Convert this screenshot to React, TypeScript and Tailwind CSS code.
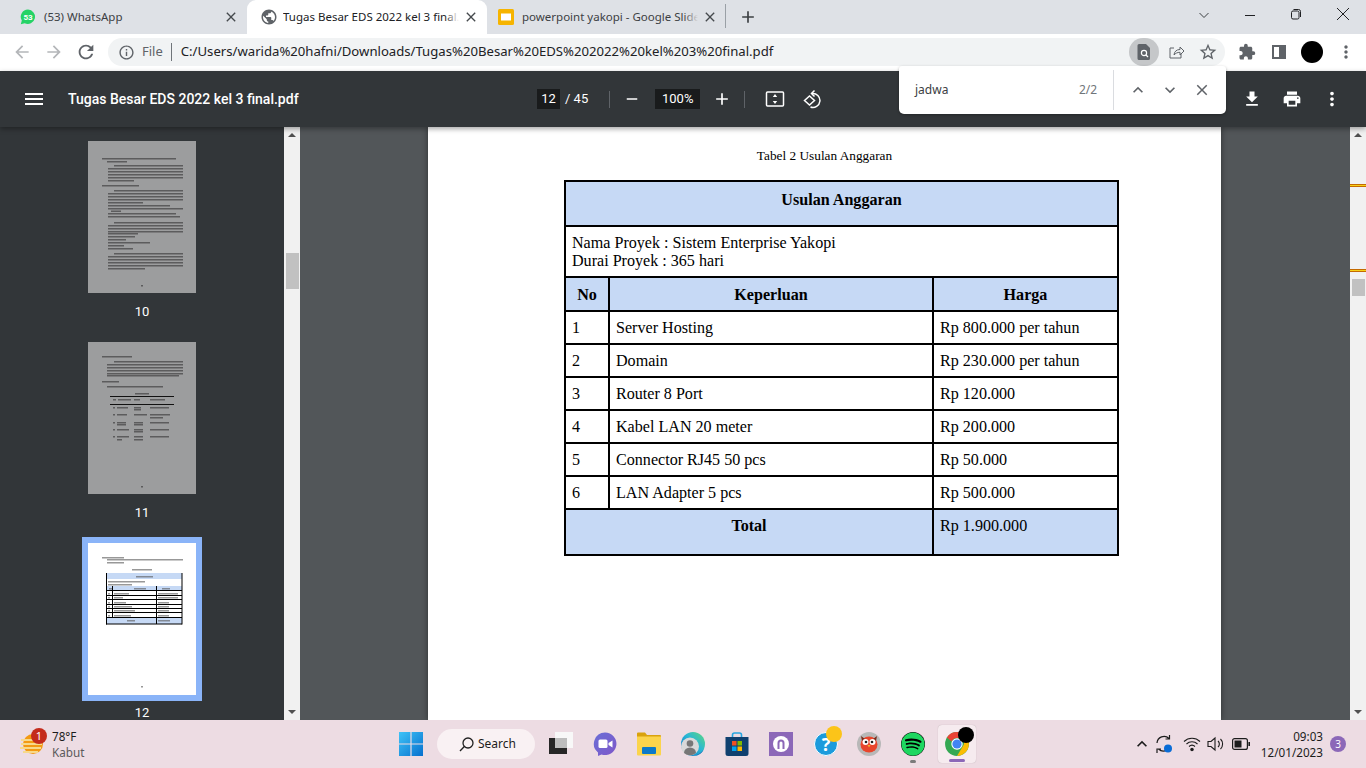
import React from 'react';
import { FaSpotify } from 'react-icons/fa';
import {
  MdArrowBack,
  MdArrowForward,
  MdExtension,
  MdFileDownload,
  MdInfoOutline,
  MdKeyboardArrowDown,
  MdKeyboardArrowUp,
  MdMenu,
  MdMoreVert,
  MdPrint,
  MdRefresh,
  MdClose,
  MdAdd,
  MdRemove,
  MdStarBorder,
  MdPublic,
} from 'react-icons/md';

const budgetRows = [
  ['1', 'Server Hosting', 'Rp 800.000 per tahun'],
  ['2', 'Domain', 'Rp 230.000 per tahun'],
  ['3', 'Router 8 Port', 'Rp 120.000'],
  ['4', 'Kabel LAN 20 meter', 'Rp 200.000'],
  ['5', 'Connector RJ45 50 pcs', 'Rp 50.000'],
  ['6', 'LAN Adapter 5 pcs', 'Rp 500.000'],
];

// [x, y, width] of the blurred text lines, in thumbnail pixels
const thumb10Lines = [
  [14, 17, 74], [19, 20, 20], [26, 24, 69], [20, 27, 75], [20, 30, 75], [20, 33, 75], [20, 36, 75], [20, 39, 26],
  [14, 44, 37], [26, 49, 69], [20, 52, 75], [20, 55, 75], [20, 58, 75], [20, 61, 35], [20, 64, 62], [20, 67, 75],
  [23, 69.5, 10], [20, 72, 68], [20, 75, 72], [26, 81, 69], [20, 84, 75], [20, 87, 75], [20, 90, 75], [20, 92, 30],
  [20, 95, 27], [20, 98, 18], [20, 101, 42], [20, 104, 16], [20, 107, 25], [26, 112, 69], [20, 115, 75], [20, 118, 75],
  [20, 121, 75], [20, 124, 75], [20, 127, 37], [53, 144, 2],
];

const thumb11Lines = [
  [14, 14, 30], [26, 19, 69], [19, 22, 76], [19, 25, 76], [19, 28, 76], [19, 31, 76], [19, 33, 72], [14, 39, 17], [19, 44, 56],
  [47, 51, 14], [25, 57, 3], [30, 57, 13], [46, 57, 6], [62, 57, 15], [25, 65, 2], [29, 65, 11], [46, 65, 7], [62, 65, 19],
  [46, 67, 7], [25, 72, 2], [29, 72, 10], [46, 72, 13], [62, 72, 20], [62, 75, 13], [25, 80, 2], [29, 80, 9], [46, 80, 9],
  [62, 80, 19], [29, 82, 9], [46, 82, 9], [25, 87, 2], [29, 87, 12], [46, 87, 9], [62, 87, 19], [46, 89, 9], [25, 94, 2],
  [29, 94, 12], [46, 94, 9], [62, 94, 19], [29, 97, 5], [46, 97, 9], [53, 144, 2],
];

const thumb12Lines = [
  [14, 14, 22], [19, 16, 76], [19, 19, 17], [44, 26, 20], [48, 33, 17], [20, 38, 37], [20, 41, 24], [21, 45, 3], [46, 45, 12],
  [74, 45, 8], [20, 50, 2], [26, 50, 15], [70, 50, 20], [20, 54, 2], [26, 54, 9], [70, 54, 20], [20, 59, 2], [26, 59, 12],
  [70, 59, 11], [20, 63, 2], [26, 63, 18], [70, 63, 11], [20, 67, 2], [26, 67, 21], [70, 67, 11], [20, 72, 2], [26, 72, 17],
  [70, 72, 11], [39, 77, 8], [70, 77, 12], [53, 143, 2],
];

function ThumbLines({ lines, color, id }: { lines: number[][]; color: string; id: string }) {
  return (
    <>
      <filter id={id} x="-10%" y="-10%" width="120%" height="120%">
        <feGaussianBlur stdDeviation="0.7" />
      </filter>
      <g fill={color} opacity="0.6" filter={`url(#${id})`}>
        {lines.map(([x, y, w], i) => (
          <rect key={i} x={x} y={y} width={w} height={1.5} />
        ))}
      </g>
    </>
  );
}

function Thumb({ num }: { num: number }) {
  const selected = num === 12;
  return (
    <div className="flex h-[201px] w-full shrink-0 flex-col items-center">
      <div className={selected ? 'border-[6px] border-[#8ab4f8] -mt-[6px]' : ''}>
        <svg
          width="108"
          height="152"
          viewBox="0 0 108 152"
          className={selected ? 'block bg-white' : 'block bg-[#9c9d9e]'}
        >
          {num === 10 && <ThumbLines id="thumbBlur10" lines={thumb10Lines} color="#333" />}
          {num === 11 && (
            <>
              <ThumbLines id="thumbBlur11" lines={thumb11Lines} color="#333" />
              <rect x="22" y="54" width="64" height="1" fill="#111" />
              <rect x="22" y="62" width="64" height="1" fill="#111" />
            </>
          )}
          {num === 12 && (
            <>
              <rect x="18" y="30" width="76" height="6" fill="#c6d9f5" />
              <rect x="18" y="43" width="76" height="4" fill="#c6d9f5" />
              <rect x="18" y="74" width="76" height="7" fill="#c6d9f5" />
              <ThumbLines id="thumbBlur12" lines={thumb12Lines} color="#555" />
              <g fill="#000">
                <rect x="18" y="30" width="1" height="51.500" />
                <rect x="93.500" y="30" width="1" height="51.500" />
                <rect x="24" y="43" width="1" height="31" />
                <rect x="68" y="43" width="1" height="38" />
                {[47, 52, 56, 61, 65, 69, 74, 80.5].map((y) => (
                  <rect key={y} x="18" y={y} width="76" height="1" />
                ))}
              </g>
            </>
          )}
        </svg>
      </div>
      <span className={`text-[13px] leading-[16px] text-white ${selected ? 'mt-[4px]' : 'mt-[11px]'}`}>{num}</span>
    </div>
  );
}

function Scrollbar({ thumb, markers }: { thumb: string; markers?: boolean }) {
  return (
    <div className="relative h-full w-[16px] shrink-0 bg-[#f1f1f1]">
      <div className="absolute left-[4px] top-[6px] h-0 w-0 border-x-[4px] border-b-[4px] border-x-transparent border-b-[#505050]" />
      <div className={`absolute left-[2px] w-[13px] bg-[#c1c1c1] ${thumb}`} />
      {markers && (
        <>
          <div className="absolute left-0 top-[57px] h-[3px] w-full border-y border-y-[#c46a00] bg-[#f7d117]" />
          <div className="absolute left-0 top-[142px] h-[3px] w-full border-y border-y-[#c46a00] bg-[#f7d117]" />
        </>
      )}
      <div className="absolute bottom-[6px] left-[4px] h-0 w-0 border-x-[4px] border-t-[4px] border-x-transparent border-t-[#505050]" />
    </div>
  );
}

function WhatsAppIcon() {
  return (
    <svg width="16" height="16" viewBox="0 0 16 16" className="shrink-0">
      <path d="M8 .6a7.2 7.2 0 0 0-6.2 10.9L.8 15.300l3.900-1A7.200 7.200 0 1 0 8 .6z" fill="#25d366" />
      <text x="8" y="10.600" textAnchor="middle" fontSize="8" fontWeight="700" fill="#fff" fontFamily="Roboto, sans-serif">53</text>
    </svg>
  );
}

function ChromeLogo() {
  return (
    <svg width="26" height="26" viewBox="0 0 48 48">
      <circle cx="24" cy="24" r="22" fill="#34a853" />
      <path d="M24 2a22 22 0 0 1 19 11H24a11 11 0 0 0-10 6.500L5.500 12A22 22 0 0 1 24 2z" fill="#ea4335" />
      <path d="M43 13a22 22 0 0 1-19 33l10.500-17.500A11 11 0 0 0 33 13z" fill="#fbbc04" />
      <circle cx="24" cy="24" r="10.500" fill="#fff" />
      <circle cx="24" cy="24" r="8.500" fill="#4285f4" />
    </svg>
  );
}

function BrowserChrome() {
  return (
    <>
      <div className="flex h-[34px] shrink-0 items-end bg-[#dee1e6] text-[11.500px] leading-none text-[#3c4043]">
        <div className="flex h-[34px] w-[247px] items-center pl-[20px] pr-[8px]">
          <WhatsAppIcon />
          <span className="ml-[8px] flex-1 whitespace-nowrap">(53) WhatsApp</span>
          <MdClose size={16} className="text-[#45494d]" />
        </div>
        <div className="flex h-[34px] w-[240px] items-center rounded-t-[9px] bg-white pl-[13px] pr-[8px] text-[#202124]">
          <MdPublic size={18} className="shrink-0 text-[#5f6368]" />
          <span className="relative ml-[5px] flex-1 overflow-hidden whitespace-nowrap py-[2px]">
            Tugas Besar EDS 2022 kel 3 final.pdf
            <span className="absolute inset-y-0 right-0 w-[14px] bg-gradient-to-l from-white to-transparent" />
          </span>
          <MdClose size={16} className="ml-[4px] shrink-0 text-[#45494d]" />
        </div>
        <div className="flex h-[34px] w-[238px] items-center pl-[11px] pr-[7px]">
          <svg width="16" height="16" viewBox="0 0 16 16" className="shrink-0">
            <rect width="16" height="16" rx="1.500" fill="#f6b400" />
            <rect x="3" y="4.500" width="10" height="7" fill="#fff" />
          </svg>
          <span className="relative ml-[8px] flex-1 overflow-hidden whitespace-nowrap py-[2px]">
            powerpoint yakopi - Google Slides
            <span className="absolute inset-y-0 right-0 w-[14px] bg-gradient-to-l from-[#dee1e6] to-transparent" />
          </span>
          <MdClose size={16} className="ml-[4px] shrink-0 text-[#45494d]" />
        </div>
        <div className="mb-[6px] h-[24px] w-px bg-[#9aa0a6]" />
        <MdAdd size={20} className="mb-[7px] ml-[12px] text-[#3c4043]" />
        <div className="ml-auto flex h-[34px] items-start text-[#202124]">
          <svg width="12" height="12" viewBox="0 0 12 12" className="mr-[34px] mt-[9px] fill-none stroke-[#3c4043]">
            <path d="M1.500 4L6 8.500 10.500 4" />
          </svg>
          <svg width="12" height="12" viewBox="0 0 12 12" className="mr-[34px] mt-[9px] stroke-[#202124]">
            <path d="M1 6.500h10" />
          </svg>
          <svg width="12" height="12" viewBox="0 0 12 12" className="mr-[34px] mt-[8px] fill-none stroke-[#202124]">
            <rect x="1.500" y="3" width="7.500" height="8" rx="1.500" />
            <path d="M3.500 1.500h5a2 2 0 0 1 2 2V9" />
          </svg>
          <svg width="14" height="14" viewBox="0 0 14 14" className="mr-[16px] mt-[7px] stroke-[#202124]">
            <path d="M1 1l12 12M13 1L1 13" />
          </svg>
        </div>
      </div>
      <div className="flex h-[37px] shrink-0 items-center bg-white pb-[1px] pl-[12px]">
        <MdArrowBack size={20} className="text-[#b4b6b9]" />
        <MdArrowForward size={20} className="ml-[12px] text-[#b4b6b9]" />
        <MdRefresh size={22} className="ml-[11px] text-[#5f6368]" />
        <div className="ml-[11px] flex h-[28px] w-[1117px] items-center rounded-full bg-[#f1f3f4] pl-[10px] pr-[6px] text-[13px] text-[#202124]">
          <MdInfoOutline size={17} className="text-[#5f6368]" />
          <span className="ml-[7px] text-[#5f6368]">File</span>
          <span className="ml-[8px] mr-[9px] h-[18px] w-px bg-[#70757a]" />
          <span className="text-[13.150px]">C:/Users/warida%20hafni/Downloads/Tugas%20Besar%20EDS%202022%20kel%203%20final.pdf</span>
          <div className="ml-auto flex items-center">
            <div className="flex h-[28px] w-[30px] items-center justify-center rounded-full bg-[#c5c7c9]">
              <svg width="14" height="16" viewBox="0 0 14 16">
                <path d="M2 0h7l4 4v10.500a1.500 1.500 0 0 1-1.500 1.500h-9.500A1.500 1.500 0 0 1 .5 14.500V1.500A1.500 1.500 0 0 1 2 0z" fill="#5f6368" />
                <circle cx="7" cy="9" r="2.600" fill="none" stroke="#fff" strokeWidth="1.200" />
                <path d="M9 11l2 2" stroke="#fff" strokeWidth="1.200" />
              </svg>
            </div>
            <svg width="18" height="18" viewBox="0 0 18 18" className="ml-[8px] fill-none stroke-[#5f6368]">
              <path d="M14 10.500V15H3V5h4" />
              <path d="M7 12c.3-3.500 2.500-5.500 6-5.500V4l4 4-4 4V9.300c-2.600 0-4.600 1-6 2.700z" />
            </svg>
            <MdStarBorder size={20} className="ml-[13px] mr-[1px] text-[#5f6368]" />
          </div>
        </div>
        <MdExtension size={18} className="ml-[13px] text-[#5f6368]" />
        <div className="ml-[16px] flex h-[14px] w-[14px] border-2 border-[#5f6368]">
          <div className="ml-auto h-full w-[5px] bg-[#5f6368]" />
        </div>
        <div className="ml-[15px] h-[22px] w-[22px] rounded-full bg-black" />
        <MdMoreVert size={20} className="ml-[13px] text-[#5f6368]" />
      </div>
    </>
  );
}

function PdfToolbar() {
  return (
    <div className="relative z-10 flex h-[56px] shrink-0 items-center bg-[#323639] pl-[22px] text-white shadow-[0_2px_5px_rgba(0,0,0,0.35)] [font-family:Roboto,sans-serif]">
      <MdMenu size={24} />
      <span className="ml-[22px] w-[469px] text-[14px] font-medium">Tugas Besar EDS 2022 kel 3 final.pdf</span>
      <span className="flex h-[20px] w-[23px] items-center justify-center bg-[#191b1c] text-[13px]">12</span>
      <span className="ml-[5px] text-[13px]">/ 45</span>
      <span className="ml-[21px] h-[17px] w-px bg-[#5f6368]" />
      <MdRemove size={18} className="ml-[13px]" />
      <span className="ml-[14px] flex h-[20px] w-[45px] items-center justify-center bg-[#191b1c] text-[13px]">100%</span>
      <MdAdd size={20} className="ml-[12px]" />
      <span className="ml-[12px] h-[17px] w-px bg-[#5f6368]" />
      <svg width="20" height="20" viewBox="0 0 20 20" className="ml-[20px] fill-none stroke-white">
        <rect x="1.500" y="3" width="17" height="14" rx="1" strokeWidth="1.500" />
        <path d="M10 5L7.800 8h4.400zM10 15l-2.200-3h4.400z" fill="#fff" stroke="none" />
      </svg>
      <svg width="20" height="20" viewBox="0 0 20 20" className="ml-[17px] fill-none stroke-white" strokeWidth="1.500">
        <path d="M2.500 11.500L7.500 7l5 4.500-5 4.500z" />
        <path d="M10 4.500a7 7 0 1 1-1.500 13.500" />
        <path d="M12.500 1.500L9.500 4.500l3 3" />
      </svg>
      <div className="ml-auto flex items-center pr-[23px]">
        <MdFileDownload size={20} />
        <MdPrint size={20} className="ml-[20px]" />
        <MdMoreVert size={22} className="ml-[19px]" />
      </div>
    </div>
  );
}

function FindBar() {
  return (
    <div className="absolute left-[899px] top-[66px] z-20 flex h-[48px] w-[327px] items-center rounded-b-[5px] rounded-t-[3px] bg-white pl-[16px] text-[12px] text-[#3c4043] shadow-[0_1px_3px_rgba(0,0,0,0.3)]">
      <span className="w-[164px]">jadwa</span>
      <span className="text-[#70757a]">2/2</span>
      <span className="ml-[16px] h-[40px] w-px bg-[#dadce0]" />
      <MdKeyboardArrowUp size={20} className="ml-[14px] text-[#5f6368]" />
      <MdKeyboardArrowDown size={20} className="ml-[12px] text-[#5f6368]" />
      <MdClose size={18} className="ml-[13px] text-[#5f6368]" />
    </div>
  );
}

function BudgetTable() {
  const cell = 'border-2 border-black px-[6px] align-middle';
  return (
    <table className="ml-[136px] mt-[16px] w-[553px] table-fixed border-collapse text-[16.100px] leading-[18px] text-black">
      <colgroup>
        <col className="w-[44px]" />
        <col className="w-[324px]" />
        <col className="w-[185px]" />
      </colgroup>
      <tbody>
        <tr>
          <td colSpan={3} className="h-[45px] border-2 border-black bg-[#c6d9f5] pb-[8px] text-center font-bold">Usulan Anggaran</td>
        </tr>
        <tr>
          <td colSpan={3} className={`h-[51px] ${cell}`}>
            Nama Proyek : Sistem Enterprise Yakopi
            <br />
            Durai Proyek : 365 hari
          </td>
        </tr>
        <tr className="bg-[#c6d9f5] font-bold">
          <td className={`h-[34px] pt-[2px] text-center ${cell}`}>No</td>
          <td className={`pt-[2px] text-center ${cell}`}>Keperluan</td>
          <td className={`pt-[2px] text-center ${cell}`}>Harga</td>
        </tr>
        {budgetRows.map((row) => (
          <tr key={row[0]}>
            <td className={`h-[33px] ${cell}`}>{row[0]}</td>
            <td className={cell}>{row[1]}</td>
            <td className={cell}>{row[2]}</td>
          </tr>
        ))}
        <tr className="bg-[#c6d9f5]">
          <td colSpan={2} className="h-[46px] border-2 border-black pb-[12px] text-center font-bold">Total</td>
          <td className="border-2 border-black px-[6px] pb-[12px]">Rp 1.900.000</td>
        </tr>
      </tbody>
    </table>
  );
}

function Taskbar() {
  return (
    <div className="flex h-[48px] shrink-0 items-center bg-[#eddce3] text-[#1c1c1c]">
      <div className="flex w-[399px] shrink-0 items-center pl-[20px]">
        <div className="relative h-[26px] w-[24px]">
          <svg width="24" height="26" viewBox="0 0 24 26">
            <circle cx="13" cy="13" r="10" fill="#f39a12" />
            <path d="M1 9h19M1 13h21M0 17h21M3 21h15" stroke="#f7d98b" strokeWidth="2" />
          </svg>
          <span className="absolute -top-[3px] left-[11px] flex h-[16px] w-[16px] items-center justify-center rounded-full bg-[#c42b1c] text-[11px] text-white">1</span>
        </div>
        <div className="ml-[8px] flex flex-col text-[11.700px] leading-[16px]">
          <span>78°F</span>
          <span className="text-[#5c5a5c]">Kabut</span>
        </div>
      </div>
      <svg width="24" height="24" viewBox="0 0 24 24" className="shrink-0">
        <defs>
          <linearGradient id="winGrad" x1="0" y1="0" x2="1" y2="1">
            <stop offset="0" stopColor="#3fc3f7" />
            <stop offset="1" stopColor="#0670ce" />
          </linearGradient>
        </defs>
        <path d="M0 0h11.400v11.400H0zM12.600 0H24v11.400H12.600zM0 12.600h11.400V24H0zM12.600 12.600H24V24H12.600z" fill="url(#winGrad)" />
      </svg>
      <div className="ml-[14px] flex h-[30px] w-[98px] items-center rounded-full bg-[#f9f1f3] pl-[22px] text-[12px]">
        <svg width="15" height="15" viewBox="0 0 15 15" className="fill-none stroke-[#202020]" strokeWidth="1.300">
          <circle cx="9" cy="6" r="5" />
          <path d="M5.300 9.500L1 14" />
        </svg>
        <span className="ml-[4px]">Search</span>
      </div>
      {/* task view */}
      <svg width="24" height="24" viewBox="0 0 24 24" className="ml-[14px] shrink-0">
        <rect x="6" y="0" width="18" height="16" fill="#f8f8f8" />
        <rect x="0" y="6" width="18" height="16" fill="#262626" />
        <rect x="6" y="6" width="12" height="10" fill="#bdbdbd" />
      </svg>
      {/* meet */}
      <svg width="24" height="24" viewBox="0 0 24 24" className="ml-[20px] shrink-0">
        <defs>
          <linearGradient id="meetGrad" x1="0" y1="0" x2="1" y2="1">
            <stop offset="0" stopColor="#6a6fd6" />
            <stop offset="1" stopColor="#7f57c9" />
          </linearGradient>
        </defs>
        <path d="M12 0.500a11.300 11.300 0 1 1-3.500 22l-3.500 1.500v-3.500A11.300 11.300 0 0 1 12 0.500z" fill="url(#meetGrad)" />
        <rect x="5.500" y="7.500" width="9" height="8.500" rx="1.500" fill="#fff" />
        <path d="M15.500 11l4-2.500v7l-4-2.500z" fill="#fff" />
      </svg>
      {/* explorer */}
      <svg width="24" height="24" viewBox="0 0 24 24" className="ml-[20px] shrink-0">
        <path d="M0 1.500a1 1 0 0 1 1-1h7l2 2.500h13a1 1 0 0 1 1 1V8H0z" fill="#d9a20e" />
        <path d="M0 4.500h24v18a1 1 0 0 1-1 1H1a1 1 0 0 1-1-1z" fill="#fbd44c" />
        <rect x="5" y="15" width="14" height="7" rx="1" fill="#0c79c9" />
      </svg>
      {/* edge profile */}
      <svg width="24" height="24" viewBox="0 0 24 24" className="ml-[20px] shrink-0">
        <defs>
          <linearGradient id="edgeGrad" x1="0" y1="1" x2="1" y2="0">
            <stop offset="0" stopColor="#0c6fc4" />
            <stop offset="0.55" stopColor="#2ab7d6" />
            <stop offset="1" stopColor="#5fd97a" />
          </linearGradient>
        </defs>
        <circle cx="12" cy="12" r="12" fill="url(#edgeGrad)" />
        <path d="M23 17a12 12 0 0 1-10 7c4-1 7-3 10-7z" fill="#0c5fae" />
        <circle cx="9" cy="14.500" r="9" fill="#d9d9d9" />
        <circle cx="9" cy="11.500" r="3.300" fill="#777" />
        <path d="M3 21a6 5.500 0 0 1 12 0 9 9 0 0 1-12 0z" fill="#777" />
      </svg>
      {/* store */}
      <svg width="24" height="24" viewBox="0 0 24 24" className="ml-[20px] shrink-0">
        <path d="M7.500 6V3a2 2 0 0 1 2-2h5a2 2 0 0 1 2 2v3" fill="none" stroke="#27a5e0" strokeWidth="1.600" />
        <path d="M0.500 5h23v16.500a2.500 2.500 0 0 1-2.500 2.500H3a2.500 2.500 0 0 1-2.500-2.500z" fill="#10406f" />
        <rect x="7" y="9" width="4.500" height="4.500" fill="#f25022" />
        <rect x="12.500" y="9" width="4.500" height="4.500" fill="#7fba00" />
        <rect x="7" y="14.500" width="4.500" height="4.500" fill="#00a4ef" />
        <rect x="12.500" y="14.500" width="4.500" height="4.500" fill="#ffb900" />
      </svg>
      {/* purple app */}
      <svg width="24" height="24" viewBox="0 0 24 24" className="ml-[20px] shrink-0">
        <rect width="24" height="24" fill="#8c68b8" />
        <circle cx="12" cy="12" r="8" fill="#fff" />
        <path d="M8.500 17v-6a3.500 3.500 0 0 1 7 0v6h-2v-6a1.500 1.500 0 0 0-3 0v6z" fill="#8c68b8" />
      </svg>
      <div className="relative ml-[21px] h-[24px] w-[24px] shrink-0">
        <div className="flex h-[24px] w-[24px] items-center justify-center rounded-full border border-white bg-[#1c9bdc] text-[18px] font-bold leading-none text-white">?</div>
        <div className="absolute -right-[4px] -top-[6px] h-[16px] w-[16px] rounded-full bg-[#fcc419]" />
      </div>
      {/* owl */}
      <svg width="24" height="24" viewBox="0 0 24 24" className="ml-[19px] shrink-0">
        <circle cx="12" cy="12" r="12" fill="#b8b8b8" />
        <ellipse cx="12" cy="12.500" rx="8.500" ry="8" fill="#e8452c" />
        <path d="M4 4l4 3-3 2zM20 4l-4 3 3 2z" fill="#7a2a1a" />
        <circle cx="8.500" cy="10" r="3" fill="#fff" />
        <circle cx="15.500" cy="10" r="3" fill="#fff" />
        <circle cx="9" cy="10" r="1.300" fill="#222" />
        <circle cx="15" cy="10" r="1.300" fill="#222" />
        <path d="M10.500 13l1.500 2.500 1.500-2.500z" fill="#f2b233" />
      </svg>
      <div className="relative ml-[20px] h-[24px] w-[24px] shrink-0">
        <FaSpotify size={24} className="rounded-full bg-black text-[#1ed760]" />
        <span className="absolute -bottom-[7px] left-[9px] h-[3px] w-[6px] rounded-full bg-[#7b7b7b]" />
      </div>
      <div className="relative ml-[13px] flex h-[38px] w-[38px] shrink-0 items-center justify-center rounded-[4px] bg-[#f6ebef] shadow-[0_0_1px_rgba(0,0,0,0.25)]">
        <ChromeLogo />
        <span className="absolute right-[2px] top-[2px] h-[16px] w-[16px] rounded-full bg-black" />
        <span className="absolute bottom-[1px] left-[11px] h-[3px] w-[16px] rounded-full bg-[#8c68b8]" />
      </div>
      <div className="ml-auto flex items-center pr-[20px] text-[11.700px]">
        <MdKeyboardArrowUp size={20} className="text-[#1c1c1c]" />
        <svg width="18" height="20" viewBox="0 0 18 20" className="ml-[3px] fill-none stroke-[#1c1c1c]" strokeWidth="1.200">
          <path d="M2 9a7 7 0 0 1 12-4.500M14.500 1v4h-4M12 16a7 7 0 0 1-8.500-1M2 19v-4h4" />
          <circle cx="13" cy="14.500" r="4" fill="#0a6cd6" stroke="none" />
        </svg>
        <svg width="18" height="16" viewBox="0 0 18 16" className="ml-[10px] fill-none stroke-[#1c1c1c]" strokeWidth="1.100">
          <path d="M1 5.500a11.500 11.500 0 0 1 16 0M3.500 8a8 8 0 0 1 11 0M6 10.500a4.500 4.500 0 0 1 6 0" />
          <circle cx="9" cy="13.500" r="1.200" fill="#1c1c1c" />
        </svg>
        <svg width="18" height="16" viewBox="0 0 18 16" className="ml-[6px] fill-none stroke-[#1c1c1c]" strokeWidth="1.100">
          <path d="M1 5.500h3L8 2v12l-4-3.500H1zM11 5a4 4 0 0 1 0 6M13.500 3a7 7 0 0 1 0 10" />
        </svg>
        <svg width="18" height="12" viewBox="0 0 18 12" className="ml-[7px]">
          <rect x="0.600" y="0.600" width="14.800" height="10.800" rx="2" fill="none" stroke="#1c1c1c" strokeWidth="1.200" />
          <rect x="2.500" y="2.500" width="7" height="7" fill="#1c1c1c" />
          <rect x="16.400" y="4" width="1.600" height="4" fill="#1c1c1c" />
        </svg>
        <div className="ml-[15px] flex w-[58px] flex-col items-end leading-[16px] text-[#1c1c1c]">
          <span>09:03</span>
          <span className="whitespace-nowrap">12/01/2023</span>
        </div>
        <span className="ml-[7px] flex h-[16px] w-[16px] items-center justify-center rounded-full bg-[#8c68b8] text-[10px] text-white">3</span>
      </div>
    </div>
  );
}

export default function App() {
  return (
    <div className="relative flex h-[768px] w-[1366px] flex-col overflow-hidden bg-[#323639] [font-family:'Noto_Sans',sans-serif]">
      <BrowserChrome />
      <PdfToolbar />
      <FindBar />
      <div className="flex min-h-0 flex-1">
        <div className="flex w-[284px] shrink-0 flex-col overflow-hidden bg-[#323639] pt-[14px] [font-family:Roboto,sans-serif]">
          {[10, 11, 12].map((n) => (
            <Thumb key={n} num={n} />
          ))}
        </div>
        <Scrollbar thumb="top-[126px] h-[36px]" />
        <div className="min-w-0 flex-1 overflow-hidden bg-[#525659] pl-[128px]">
          <div className="h-full w-[793px] bg-white pt-[21px] shadow-[0_0_6px_rgba(0,0,0,0.45)] [font-family:'Liberation_Serif',serif]">
            <p className="text-center text-[13.300px] leading-[16px] text-black">Tabel 2 Usulan Anggaran</p>
            <BudgetTable />
          </div>
        </div>
        <Scrollbar thumb="top-[152px] h-[17px]" markers />
      </div>
      <Taskbar />
    </div>
  );
}
